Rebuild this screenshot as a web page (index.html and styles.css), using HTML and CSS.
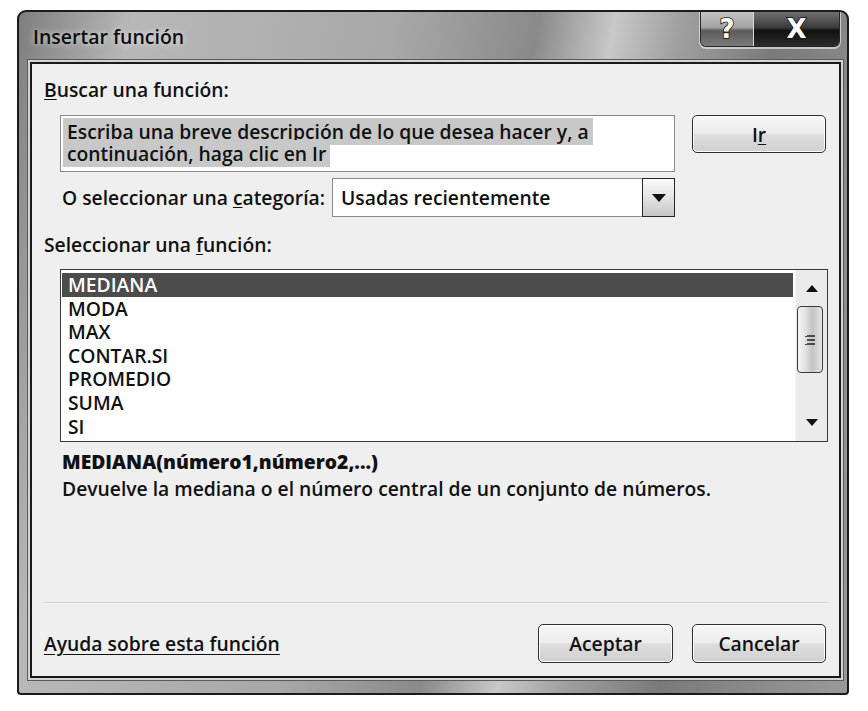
FILE: index.html
```html
<!DOCTYPE html>
<html lang="es">
<head>
<meta charset="utf-8">
<title>Insertar función</title>
<link rel="stylesheet" href="styles.css">
</head>
<body>
<div class="window">
  <div class="titlebar">
    <div class="title">Insertar función</div>
    <div class="caption-buttons">
      <div class="cap-btn help">?</div>
      <div class="cap-btn close">X</div>
    </div>
  </div>
  <div class="client">
    <div class="label"><u>B</u>uscar una función:</div>
    <div class="search-row">
      <div class="textbox"><span class="sel">Escriba una breve descripción de lo que desea hacer y, a<br>continuación, haga clic en Ir</span></div>
      <div class="btn btn-ir">I<u>r</u></div>
    </div>
    <div class="category-row">
      <div class="cat-label">O seleccionar una <u>c</u>ategoría:</div>
      <div class="combo">
        <div class="combo-value">Usadas recientemente</div>
        <div class="combo-arrow">
          <svg width="14" height="8" viewBox="0 0 14 8"><path d="M0 0 H14 L7 8 Z" fill="#111"/></svg>
        </div>
      </div>
    </div>
    <div class="label label-fn">Seleccionar una <u>f</u>unción:</div>
    <div class="listbox">
      <div class="items">
        <div class="item selected">MEDIANA</div>
        <div class="item">MODA</div>
        <div class="item">MAX</div>
        <div class="item">CONTAR.SI</div>
        <div class="item">PROMEDIO</div>
        <div class="item">SUMA</div>
        <div class="item">SI</div>
      </div>
      <div class="scrollbar">
        <div class="sb-arrow sb-up">
          <svg width="12" height="7" viewBox="0 0 12 7"><path d="M6 0 L12 7 H0 Z" fill="#111"/></svg>
        </div>
        <div class="sb-thumb">
          <svg width="11" height="12" viewBox="0 0 11 12"><path d="M2 2 H10 M2 6 H10 M2 10 H10 M1 2 V3 M1 10 V11" stroke="#222" stroke-width="1.6"/></svg>
        </div>
        <div class="sb-track"></div>
        <div class="sb-arrow sb-down">
          <svg width="12" height="7" viewBox="0 0 12 7"><path d="M0 0 H12 L6 7 Z" fill="#111"/></svg>
        </div>
      </div>
    </div>
    <div class="signature">MEDIANA(número1,número2,...)</div>
    <div class="description">Devuelve la mediana o el número central de un conjunto de números.</div>
    <div class="spacer"></div>
    <div class="separator"></div>
    <div class="footer">
      <a class="help-link">Ayuda sobre esta función</a>
      <div class="btn btn-ok">Aceptar</div>
      <div class="btn btn-cancel">Cancelar</div>
    </div>
  </div>
</div>
</body>
</html>
```

FILE: styles.css
```css
* { box-sizing: border-box; }
html, body { margin: 0; padding: 0; background: #fff; }
body {
  font-family: "Open Sans", "Noto Sans", "DejaVu Sans", sans-serif;
  font-size: 19.3px;
  font-weight: 600;
  color: #111;
}
u { text-decoration: underline; text-underline-offset: 2px; }

.window {
  margin: 10px 0 0 17px;
  width: 832px;
  height: 685px;
  border: 2px solid #1b1b1b;
  border-radius: 9px 9px 4px 4px;
  background: linear-gradient(100deg, #7e7e7e 0%, #b8b8b8 12%, #a8a8a8 40%, #8a8a8a 55%, #c8c8c8 63%, #a0a0a0 70%, #7a7a7a 80%, #9a9a9a 100%);
  padding: 0 6px 15px 11px;
  display: flex;
  flex-direction: column;
}

.titlebar {
  height: 50px;
  flex-shrink: 0;
  display: flex;
  align-items: flex-start;
}
.title {
  padding-left: 3px;
  margin-top: 12px;
  font-size: 19.5px;
  line-height: 26px;
  color: #0e0e0e;
  text-shadow: 0 0 6px rgba(255,255,255,0.7);
}
.caption-buttons {
  margin-left: auto;
  margin-right: 1px;
  display: flex;
  height: 35px;
  border: 1.5px solid #262626;
  border-top: none;
  border-radius: 0 0 6px 6px;
  overflow: hidden;
  box-shadow: 0 1px 0 1px rgba(255,255,255,0.55);
}
.cap-btn {
  display: flex;
  align-items: center;
  justify-content: center;
  font-family: "DejaVu Sans", sans-serif;
  font-weight: 700;
  color: #fff;
  -webkit-text-stroke: 1.6px #111;
  paint-order: stroke fill;
}
.help {
  width: 52px;
  font-size: 26px;
  background: linear-gradient(#c4c4c4 0%, #a4a4a4 45%, #5c5c5c 55%, #7a7a7a 100%);
}
.close {
  width: 86px;
  border-left: 1px solid #d8d8d8;
  background: linear-gradient(#707070 0%, #3c3c3c 45%, #111 55%, #2c2c2c 100%);
  font-size: 26px;
}

.client {
  flex: 1;
  background: #efefef;
  border: 2px solid #1a1a1a;
  padding: 14px 11px 13px 12px;
  display: flex;
  flex-direction: column;
  box-shadow: 0 0 0 2px #d4d4d4, 0 0 0 3px #5a5a5a;
}

.label { line-height: 24px; }
.search-row {
  display: flex;
  align-items: flex-start;
  margin-top: 13px;
  padding-left: 16px;
}
.textbox {
  width: 615px;
  height: 57px;
  background: #fff;
  border: 1px solid #8a8a8a;
  padding: 5px 4px 0 2px;
  line-height: 22px;
}
.sel {
  background: #c8c8c8;
  padding: 0 4px;
  -webkit-box-decoration-break: clone;
  box-decoration-break: clone;
}
.btn {
  border: 1.5px solid #2e2e2e;
  border-radius: 5px;
  background: linear-gradient(#f7f7f7 0%, #ececec 48%, #dddddd 52%, #d0d0d0 100%);
  box-shadow: inset 0 0 0 1px #fbfbfb;
  display: flex;
  align-items: center;
  justify-content: center;
}
.btn-ir { margin-left: 17px; width: 134px; height: 38px; }

.category-row {
  display: flex;
  align-items: center;
  margin-top: 6px;
  padding-left: 18px;
  height: 39px;
}
.cat-label { width: 270px; }
.combo {
  width: 343px;
  height: 39px;
  display: flex;
  background: #fff;
  border: 1px solid #8a8a8a;
}
.combo-value {
  flex: 1;
  padding-left: 8px;
  display: flex;
  align-items: center;
}
.combo-arrow {
  width: 33px;
  margin: -1px -1px -1px 0;
  border: 1.5px solid #262626;
  background: linear-gradient(#fafafa 0%, #e4e4e4 50%, #c6c6c6 100%);
  display: flex;
  align-items: center;
  justify-content: center;
}

.label-fn { margin-top: 16px; }

.listbox {
  margin-top: 12px;
  margin-left: 16px;
  width: 768px;
  height: 173px;
  border: 1px solid #3a3a3a;
  background: #fff;
  display: flex;
}
.items {
  flex: 1;
  padding: 3px 2px 0 1px;
  overflow: hidden;
}
.item {
  height: 23.6px;
  line-height: 23.6px;
  padding-left: 6px;
}
.item.selected {
  background: #4c4c4c;
  color: #fff;
}
.scrollbar {
  width: 32px;
  background: #ebebeb;
  border-left: 1px solid #f6f6f6;
  display: flex;
  flex-direction: column;
}
.sb-arrow {
  display: flex;
  align-items: center;
  justify-content: center;
}
.sb-up { height: 36px; }
.sb-down { height: 37px; }
.sb-track { flex: 1; }
.sb-thumb {
  height: 67px;
  margin: 0 4px 0 1px;
  border: 1px solid #3a3a3a;
  border-radius: 4px;
  background: linear-gradient(90deg, #f6f6f6 0%, #dedede 35%, #c4c4c4 60%, #e6e6e6 100%);
  display: flex;
  align-items: center;
  justify-content: center;
}

.signature {
  margin-top: 8px;
  margin-left: 18px;
  line-height: 24px;
  font-weight: 800;
}
.description {
  margin-top: 3px;
  margin-left: 18px;
  line-height: 24px;
}
.spacer { flex: 1; }
.separator {
  height: 2px;
  border-top: 1px solid #cdcdcd;
  border-bottom: 1px solid #fbfbfb;
}
.footer {
  margin-top: 20px;
  display: flex;
  align-items: center;
  padding-right: 2px;
}
.help-link {
  flex: 1;
  color: #111;
  text-decoration: underline;
  text-underline-offset: 3px;
}
.btn-ok { width: 135px; height: 39px; }
.btn-cancel { width: 134px; height: 39px; margin-left: 19px; }
```
